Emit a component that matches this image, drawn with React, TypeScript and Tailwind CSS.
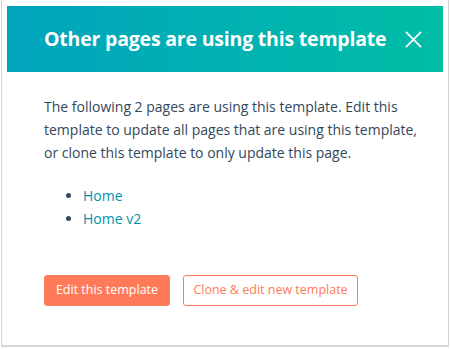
import React from "react";

export default function App() {
  return (
    <div className="w-[450px] h-[349px] bg-white" style={{ fontFamily: "'Open Sans', Lato, sans-serif" }}>
      <div className="ml-px w-[448px] h-[347px] border-l border-r border-b-2 border-[#d6d6d6] pt-[6px] px-[5px] flex flex-col">
        <div className="h-[66px] flex items-center justify-between pl-[37px] pr-[21px] bg-gradient-to-r from-[#00a4bd] to-[#00bda5]">
          <h1 className="text-white text-[19.5px] font-bold leading-none tracking-[-0.2px]">Other pages are using this template</h1>
          <svg width="17" height="17" viewBox="0 0 18 18" fill="none" stroke="white" strokeWidth="1.8" strokeLinecap="round">
            <path d="M1.5 1.5L16.5 16.5M16.5 1.5L1.5 16.5" />
          </svg>
        </div>
        <div className="pl-[37px] pr-[20px] pt-[23px] text-[#33475b]">
          <p className="text-[14px] leading-[23px]">
            The following 2 pages are using this template. Edit this template to update all pages that are using this template, or clone this template to only update this page.
          </p>
          <ul className="mt-[20px] pl-[39px] list-disc marker:text-[#33475b] text-[14px] leading-[23px]">
            <li className="text-[#0091ae]">Home</li>
            <li className="text-[#0091ae]">Home v2</li>
          </ul>
          <div className="mt-[45px] flex gap-[13px]">
            <button className="h-[31px] w-[126px] rounded-[3px] bg-[#ff7a59] border border-[#ff7a59] text-white text-[12.5px]">Edit this template</button>
            <button className="h-[31px] w-[175px] rounded-[3px] bg-white border border-[#ff7a59] text-[#ff7a59] text-[12.5px]">Clone &amp; edit new template</button>
          </div>
        </div>
      </div>
    </div>
  );
}
